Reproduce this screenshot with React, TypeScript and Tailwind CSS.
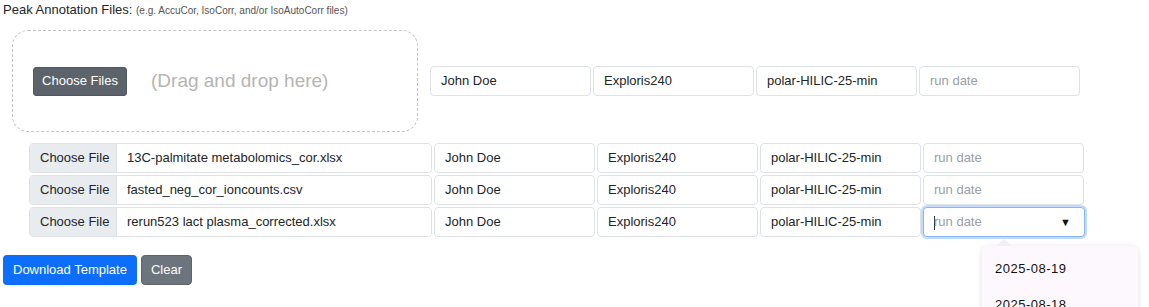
import React from 'react';

const font = { fontFamily: '"Liberation Sans", Arial, sans-serif' };

const rows = [
  '13C-palmitate metabolomics_cor.xlsx',
  'fasted_neg_cor_ioncounts.csv',
  'rerun523 lact plasma_corrected.xlsx',
];

function Field({ value, placeholder }: { value?: string; placeholder?: string }) {
  return (
    <div className="w-[161px] h-[30px] shrink-0 flex items-center px-[10px] border border-[#dee2e6] rounded-[4px] bg-white text-[13px] text-[#212529]">
      {value ?? <span className="text-[#9aa0a6]">{placeholder}</span>}
    </div>
  );
}

function DateMenu() {
  return (
    <div className="absolute left-[59px] top-[39px] w-[156px] h-[80px] bg-[#fdf8fd] rounded-[6px] shadow-[0_1px_6px_rgba(0,0,0,0.12)] z-10">
      <div className="absolute -top-[7px] left-[14px] w-0 h-0 border-l-[8px] border-r-[8px] border-b-[7px] border-l-transparent border-r-transparent border-b-[#f3eef3]" />
      <div className="pl-[13px] pt-[14px] text-[13px] text-[#111] tracking-[0.5px] leading-[17px]">2025-08-19</div>
      <div className="pl-[13px] pt-[19px] text-[13px] text-[#111] tracking-[0.5px] leading-[17px]">2025-08-18</div>
    </div>
  );
}

function FileRow({ name, focused }: { name: string; focused?: boolean }) {
  return (
    <div className="flex items-center gap-[2px]">
      <div className="w-[403px] h-[30px] flex border border-[#dee2e6] rounded-[4px] overflow-hidden text-[13px] text-[#212529]">
        <div className="w-[87px] shrink-0 bg-[#e9ecef] border-r border-[#dee2e6] flex items-center pl-[10px]">Choose File</div>
        <div className="flex items-center pl-[10px] bg-white flex-1">{name}</div>
      </div>
      <Field value="John Doe" />
      <Field value="Exploris240" />
      <Field value="polar-HILIC-25-min" />
      {focused ? (
        <div className="relative">
          <div className="w-[162px] h-[30px] flex items-center justify-between pl-[10px] pr-[13px] border border-[#86b7fe] rounded-[4px] bg-white shadow-[0_0_0_2px_rgba(13,110,253,0.25)] text-[13px]">
            <span className="text-[#9aa0a6]">
              <span className="inline-block w-px h-[14px] bg-[#333] align-middle -mr-px" />
              run date
            </span>
            <span className="text-[11px] text-[#111]">▼</span>
          </div>
          <DateMenu />
        </div>
      ) : (
        <Field placeholder="run date" />
      )}
    </div>
  );
}

export default function App() {
  return (
    <div className="relative w-[1149px] h-[307px] overflow-hidden bg-white pl-[3px] pt-[1px]" style={font}>
      <div className="text-[13px] leading-[18px] text-[#212529]">
        Peak Annotation Files: <span className="text-[10px] text-[#555]">(e.g. AccuCor, IsoCorr, and/or IsoAutoCorr files)</span>
      </div>

      <div className="flex items-center mt-[10px] ml-[9px]">
        <div className="w-[406px] h-[102px] shrink-0 border border-dashed border-[#c4c4c4] rounded-[16px] flex items-center pl-[20px]">
          <button className="w-[94px] h-[29px] bg-[#5c636a] text-white text-[13px] rounded-[3px] border border-[#50575e]">
            Choose Files
          </button>
          <span className="ml-[24px] text-[19px] text-[#b5b5b5]">(Drag and drop here)</span>
        </div>
        <div className="flex gap-[2px] ml-[12px]">
          <Field value="John Doe" />
          <Field value="Exploris240" />
          <Field value="polar-HILIC-25-min" />
          <Field placeholder="run date" />
        </div>
      </div>

      <div className="flex flex-col gap-[2px] mt-[11px] ml-[26px]">
        {rows.map((r, i) => (
          <FileRow key={r} name={r} focused={i === 2} />
        ))}
      </div>

      <div className="flex gap-[4px] mt-[18px]">
        <button className="h-[30px] px-[10px] bg-[#0d6efd] text-white text-[13px] rounded-[4px]">Download Template</button>
        <button className="h-[30px] px-[9px] bg-[#6c757d] text-white text-[13px] rounded-[4px] border border-[#5c636a]">Clear</button>
      </div>
    </div>
  );
}
